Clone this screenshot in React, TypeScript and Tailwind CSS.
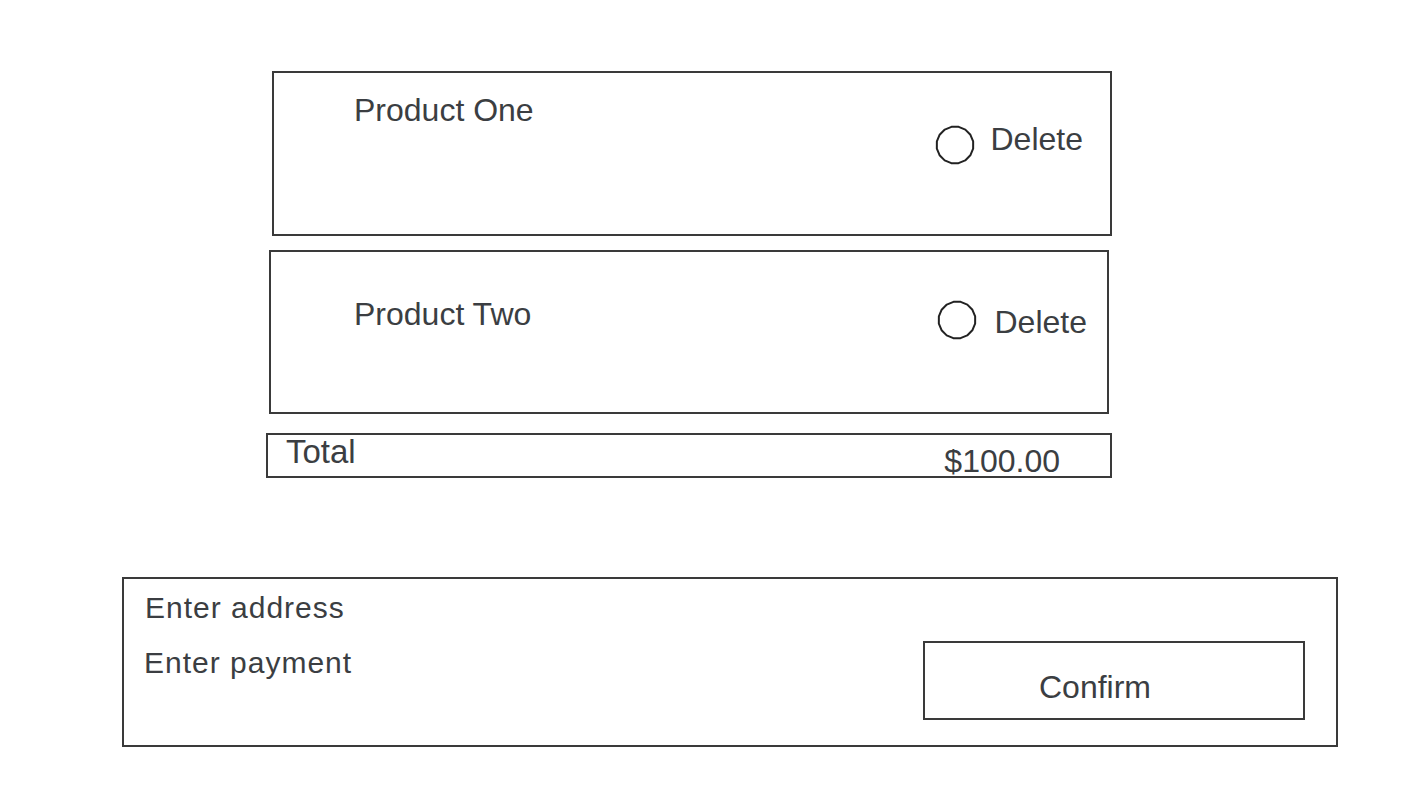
import React from 'react';

const font = { fontFamily: '"Liberation Sans", Arial, sans-serif' };

// hand-drawn looking radio: a circle made of short straight segments
const ringPoints = Array.from({ length: 16 }, (_, i) => {
  const a = (i / 16) * Math.PI * 2 + 0.2;
  return `${(20 + 18.5 * Math.cos(a)).toFixed(2)},${(20 + 18.5 * Math.sin(a)).toFixed(2)}`;
}).join(' ');

const Ring: React.FC<{ className?: string }> = ({ className }) => (
  <svg width="40" height="40" viewBox="0 0 40 40" className={className}>
    <polygon points={ringPoints} fill="none" stroke="#222" strokeWidth="2" strokeLinejoin="round" />
  </svg>
);

const App: React.FC = () => {
  return (
    <div className="w-full h-[800px] bg-white text-[#3b3e42] flex flex-col pt-[71px]" style={font}>
      {/* Product One */}
      <div className="ml-[272px] w-[840px] h-[165px] border-2 border-[#3a3a3a] flex items-start">
        <span className="pl-[80px] pt-[21px] text-[32px] leading-none">Product One</span>
        <div className="ml-auto mr-[27px] flex items-start">
          <Ring className="mt-[52px]" />
          <span className="ml-[16px] mt-[50px] text-[32px] leading-none">Delete</span>
        </div>
      </div>

      {/* Product Two */}
      <div className="ml-[269px] mt-[14px] w-[840px] h-[164px] border-2 border-[#3a3a3a] flex items-start">
        <span className="pl-[83px] pt-[46px] text-[32px] leading-none">Product Two</span>
        <div className="ml-auto mr-[20px] flex items-start">
          <Ring className="mt-[48px]" />
          <span className="ml-[18px] mt-[54px] text-[32px] leading-none">Delete</span>
        </div>
      </div>

      {/* Total */}
      <div className="ml-[266px] mt-[19px] w-[846px] h-[45px] border-2 border-[#3a3a3a] flex items-start">
        <span className="pl-[18px] text-[33px] leading-none">Total</span>
        <span className="ml-auto mr-[50px] mt-[10px] text-[32px] leading-none">$100.00</span>
      </div>

      {/* Checkout */}
      <div className="ml-[122px] mt-[99px] w-[1216px] h-[170px] border-2 border-[#3a3a3a] flex items-start">
        <div className="pl-[21px] pt-[14px] flex flex-col text-[30px] leading-none tracking-[1px]">
          <span>Enter address</span>
          <span className="mt-[25px] -ml-px">Enter payment</span>
        </div>
        <button className="ml-auto mr-[31px] mt-[62px] w-[382px] h-[79px] border-2 border-[#3a3a3a] flex items-start text-left">
          <span className="pl-[114px] pt-[28px] text-[32px] leading-none">Confirm</span>
        </button>
      </div>
    </div>
  );
};

export default App;
